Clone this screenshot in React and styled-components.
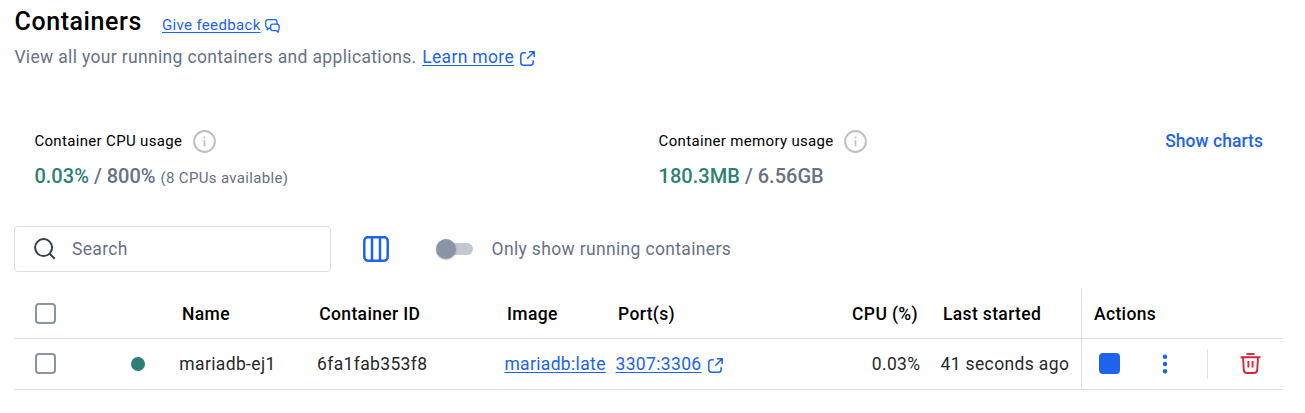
import React from "react";
import styled, { createGlobalStyle } from "styled-components";

const BLUE = "#1d63ed";
const GRAY = "#677285";
const GREEN = "#2e7f74";
const LINE = "#dedfe1";

const GlobalStyle = createGlobalStyle`
  * { box-sizing: border-box; }
  body {
    margin: 0;
    background: #fff;
    color: #000;
    font-family: Roboto, "Liberation Sans", sans-serif;
  }
`;

const Page = styled.main`
  width: 1305px;
  height: 413px;
  padding: 0 22px 0 14px;
  overflow: hidden;
  white-space: nowrap;
`;

const Heading = styled.header`
  display: flex;
  align-items: center;
  height: 42px;
`;

const Title = styled.h1`
  margin: 0;
  padding: 1px 0 0 0.5px;
  width: 148px;
  font-size: 25px;
  font-weight: 500;
  line-height: 42px;
  letter-spacing: 0.58px;
`;

const Link = styled.a`
  color: ${BLUE};
  font-size: ${(p) => p.$size || 17.5}px;
  letter-spacing: 0.34px;
  text-decoration: underline;
  text-underline-offset: 2px;
  text-decoration-thickness: 1px;
`;

const FeedbackLink = styled(Link)`
  padding-top: 7px;
`;

const Icon = styled.svg`
  display: block;
  flex: none;
  width: ${(p) => p.$w}px;
  height: ${(p) => p.$h || p.$w}px;
  margin: ${(p) => p.$m || 0};
  fill: none;
  stroke: ${(p) => p.$color || BLUE};
  stroke-linejoin: round;
`;

const Description = styled.div`
  display: flex;
  align-items: center;
  height: 30px;
  padding-left: 0.4px;
  color: ${GRAY};
  font-size: 17.5px;
  letter-spacing: 0.34px;
  gap: 5.6px;
`;

const Stats = styled.section`
  display: flex;
  height: 154px;
  padding: 55px 20px 0 20.4px;
`;

const Stat = styled.div`
  width: 624.5px;
`;

const StatLabel = styled.div`
  display: flex;
  align-items: center;
  height: 28px;
  gap: 10.6px;
  font-size: 15px;
  letter-spacing: 0.33px;
`;

const StatValue = styled.div`
  height: 42px;
  line-height: 42px;
  color: ${GRAY};
  font-size: 20px;
  font-weight: 500;
  letter-spacing: 0.02px;
`;

const Used = styled.span`
  color: ${GREEN};
`;

const Note = styled.small`
  font-size: 15px;
  font-weight: 400;
  letter-spacing: 0.33px;
`;

const TextButton = styled.button`
  height: 28px;
  padding: 0;
  border: 0;
  background: none;
  color: ${BLUE};
  font: 500 17.5px/28px Roboto, sans-serif;
  letter-spacing: 0.04px;
`;

const ShowCharts = styled(TextButton)`
  margin-left: -117.6px;
`;

const Toolbar = styled.section`
  display: flex;
  align-items: center;
  height: 46px;
  color: ${GRAY};
  font-size: 17.5px;
  letter-spacing: 0.34px;
`;

const SearchBox = styled.div`
  display: flex;
  align-items: center;
  width: 317px;
  height: 46px;
  padding-left: 19px;
  gap: 16px;
  border: 1px solid ${LINE};
  border-radius: 4px;
`;

const Switch = styled.span`
  display: flex;
  align-items: center;
  width: 37px;
  height: 20px;
  margin: 0 18.6px 0 47px;
`;

const Knob = styled.span`
  width: 20px;
  height: 20px;
  border-radius: 50%;
  background: #8b93a7;
  box-shadow: 0 1px 2px rgba(0, 0, 0, 0.25);
  z-index: 1;
`;

const Track = styled.span`
  width: 29px;
  height: 12px;
  margin-left: -12px;
  border-radius: 6px;
  background: #c3c7d1;
`;

const Table = styled.section`
  margin-top: 17px;
`;

const Row = styled.div`
  display: grid;
  grid-template-columns: 104px 51px 140px 187px 111px 165px 151px 158px 202px;
  height: ${(p) => p.$h}px;
  width: 1269px;
  overflow: hidden;
  border-bottom: 1px solid ${LINE};
  font-size: 17.5px;
  font-weight: ${(p) => (p.$head ? 500 : 400)};
  letter-spacing: ${(p) => (p.$head ? 0.35 : 0.36)}px;
  color: ${(p) => (p.$head ? "#000" : "#27282b")};
`;

const Cell = styled.div`
  display: flex;
  align-items: center;
  min-width: 0;
  padding-left: ${(p) => p.$pl || 0}px;
  justify-content: ${(p) => (p.$right ? "flex-end" : "flex-start")};
  padding-right: ${(p) => p.$pr || 0}px;
`;

const ActionsCell = styled(Cell)`
  border-left: 1px solid ${LINE};
`;

const Checkbox = styled.span`
  width: 21px;
  height: 21px;
  margin-bottom: 1px;
  border: 2px solid #8b93a7;
  border-radius: 4px;
`;

const StatusDot = styled.span`
  width: 14px;
  height: 14px;
  margin-bottom: 1px;
  border-radius: 50%;
  background: ${GREEN};
`;

const StopIcon = styled.span`
  width: 21px;
  height: 21px;
  margin-bottom: 1px;
  border-radius: 4px;
  background: ${BLUE};
`;

const Divider = styled.span`
  width: 1px;
  height: 30px;
  margin: 0 32px 1px 39.5px;
  background: #e4e5e8;
`;

const ExternalIcon = ({ m }) => (
  <Icon $w={15} $m={m} viewBox="0 0 15 15" strokeWidth="1.5">
    <path d="M5.8 1.8H3.6A2.8 2.8 0 0 0 .8 4.6v6.8a2.8 2.8 0 0 0 2.8 2.8h6.8a2.8 2.8 0 0 0 2.8-2.8V9.2M9 .8h5.2V6M14.2.8 7.2 7.8" />
  </Icon>
);

const InfoIcon = () => (
  <Icon $w={23} $m="1px 0 0" $color="#bfbfbf" viewBox="0 0 23 23" strokeWidth="2">
    <circle cx="11.5" cy="11.5" r="10.4" />
    <path d="M11.5 10.3v6M11.5 6.5v2" strokeWidth="1.7" />
  </Icon>
);

export default function App() {
  return (
    <>
      <GlobalStyle />
      <Page>
        <Heading>
          <Title>Containers</Title>
          <FeedbackLink $size={15}>Give feedback</FeedbackLink>
          <Icon $w={15} $h={14} $m="10px 0 0 4px" viewBox="0 0 15 14" strokeWidth="1.3">
            <path d="M5.5 9.2H4L2.2 10.8V8.8Q.7 8.3.7 6.5V3Q.7.7 3 .7h6.8Q12 .7 12 3v2" />
            <path d="M7.7 5.2h4.2q2.2 0 2.2 2.1v2.2q0 1.1-.8 1.6v2.1l-2-1.5H7.7q-2.1 0-2.1-2.1V7.3q0-2.1 2.1-2.1Z" />
          </Icon>
        </Heading>
        <Description>
          <span>View all your running containers and applications.</span>
          <Link>Learn more</Link>
          <ExternalIcon m="2px 0 0" />
        </Description>
        <Stats>
          <Stat>
            <StatLabel>Container CPU usage <InfoIcon /></StatLabel>
            <StatValue><Used>0.03%</Used> / 800% <Note>(8 CPUs available)</Note></StatValue>
          </Stat>
          <Stat>
            <StatLabel>Container memory usage <InfoIcon /></StatLabel>
            <StatValue><Used>180.3MB</Used> / 6.56GB</StatValue>
          </Stat>
          <ShowCharts>Show charts</ShowCharts>
        </Stats>
        <Toolbar>
          <SearchBox>
            <Icon $w={22} $color="#393f49" viewBox="0 0 22 22" strokeWidth="2">
              <circle cx="9.6" cy="9.6" r="8.5" />
              <path d="m15.5 15.5 5.3 5.3" />
            </Icon>
            <span>Search</span>
          </SearchBox>
          <Icon $w={26} $m="0 0 0 32px" viewBox="0 0 26 26" strokeWidth="2.5">
            <rect x="1.3" y="1.3" width="23.4" height="23.4" rx="3.6" />
            <path d="M9 1v24M17 1v24" />
          </Icon>
          <Switch><Knob /><Track /></Switch>
          <span>Only show running containers</span>
        </Toolbar>
        <Table>
          <Row $head $h={50}>
            <Cell $pl={21}><Checkbox /></Cell>
            <Cell />
            <Cell $pl={13}>Name</Cell>
            <Cell $pl={10.3}>Container ID</Cell>
            <Cell $pl={11}>Image</Cell>
            <Cell $pl={11}>Port(s)</Cell>
            <Cell $right $pr={5}>CPU (%)</Cell>
            <Cell $pl={20}>Last started</Cell>
            <ActionsCell $pl={12}>Actions</ActionsCell>
          </Row>
          <Row $h={51}>
            <Cell $pl={21}><Checkbox /></Cell>
            <Cell $pl={13.4}><StatusDot /></Cell>
            <Cell $pl={10.3}>mariadb-ej1</Cell>
            <Cell $pl={8}>6fa1fab353f8</Cell>
            <Cell $pl={8.4}><Link>mariadb:late</Link></Cell>
            <Cell $pl={8.5}>
              <Link>3307:3306</Link>
              <ExternalIcon m="3px 0 0 7px" />
            </Cell>
            <Cell $right $pr={2.5}>0.03%</Cell>
            <Cell $pl={17.5}>41 seconds ago</Cell>
            <ActionsCell $pl={17}>
              <StopIcon />
              <Icon $w={6} $h={20} $m="0 0 1px 41.5px" viewBox="0 0 6 20">
                <g fill={BLUE} stroke="none">
                  <circle cx="3" cy="2.7" r="2.2" />
                  <circle cx="3" cy="10" r="2.2" />
                  <circle cx="3" cy="17.3" r="2.2" />
                </g>
              </Icon>
              <Divider />
              <Icon $w={21} $m="0 0 1px" $color="#d5263a" viewBox="0 0 21 21" strokeWidth="1.9">
                <path d="M6.5 1h8" />
                <path d="M.5 4.2h20M3 4.2l.8 12.8q.2 3 3.2 3h7q3 0 3.2-3L18 4.2M8.4 8v6.4M12.6 8v6.4" />
              </Icon>
            </ActionsCell>
          </Row>
        </Table>
      </Page>
    </>
  );
}
